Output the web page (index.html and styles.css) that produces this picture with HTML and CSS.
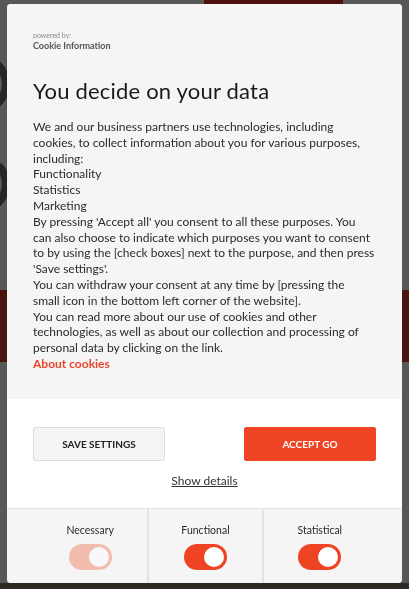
FILE: index.html
```html
<!DOCTYPE html>
<html lang="en">
<head>
    <meta charset="UTF-8">
    <meta name="viewport" content="width=device-width, initial-scale=1.0">
    <title>Cookie consent</title>
    <link rel="stylesheet" href="styles.css">
</head>
<body>
    <!-- Page behind the dialog -->
    <div class="page">
        <div class="page-top"><div class="page-hero"></div></div>
        <div class="page-shapes">
            <span class="arc arc-c"></span>
            <span class="arc arc-u"></span>
        </div>
        <div class="page-band"></div>
        <div class="page-foot"></div>
    </div>

    <!-- Consent dialog -->
    <div class="overlay">
        <div class="consent">
            <div class="consent-body">
                <div class="powered">
                    <span class="powered-by">powered by:</span>
                    <span class="powered-name">Cookie Information</span>
                </div>

                <h1>You decide on your data</h1>

                <p class="consent-text">
                    We and our business partners use technologies, including cookies, to collect information about you for various purposes, including:<br>
                    Functionality<br>
                    Statistics<br>
                    Marketing<br>
                    By pressing 'Accept all' you consent to all these purposes. You can also choose to indicate which purposes you want to consent to by using the [check boxes] next to the purpose, and then press 'Save settings'.<br>
                    You can withdraw your consent at any time by [pressing the<br>
                    small icon in the bottom left corner of the website].<br>
                    You can read more about our use of cookies and other technologies, as well as about our collection and processing of personal data by clicking on the link.<br>
                    <a href="#" class="about-link">About cookies</a>
                </p>
            </div>

            <div class="consent-actions">
                <div class="buttons">
                    <button class="btn btn-save">Save settings</button>
                    <button class="btn btn-accept">Accept go</button>
                </div>
                <a href="#" class="show-details">Show details</a>
            </div>

            <div class="consent-toggles">
                <div class="toggle-item">
                    <span>Necessary</span>
                    <span class="switch is-on is-locked"><span class="knob"></span></span>
                </div>
                <div class="toggle-item">
                    <span>Functional</span>
                    <span class="switch is-on"><span class="knob"></span></span>
                </div>
                <div class="toggle-item">
                    <span>Statistical</span>
                    <span class="switch is-on"><span class="knob"></span></span>
                </div>
            </div>
        </div>
    </div>
</body>
</html>
```

FILE: styles.css
```css
body {
    font-family: Lato, "Open Sans", sans-serif;
    margin: 0;
    padding: 0;
    height: 589px;
    overflow: hidden;
    background-color: #585858;
}

/* Page under the overlay */
.page {
    height: 589px;
    display: flex;
    flex-direction: column;
}

.page-top {
    height: 4px;
    padding-left: 204px;
}

.page-hero {
    width: 139px;
    height: 4px;
    background-color: #4d120c;
}

.page-shapes {
    height: 286px;
    display: flex;
    flex-direction: column;
    gap: 40px;
    padding-top: 50px;
    box-sizing: border-box;
}

.arc {
    display: block;
    width: 60px;
    height: 60px;
    margin-left: -50px;
    border: 8px solid #262626;
    border-radius: 50%;
    box-sizing: border-box;
}

.arc-u {
    border-top-color: transparent;
}

.page-band {
    height: 72px;
    background-color: #4a1510;
}

.page-foot {
    margin-top: auto;
    height: 6px;
    background-color: #2e2a25;
}

/* Dialog */
.overlay {
    position: fixed;
    top: 4px;
    left: 7px;
}

.consent {
    width: 395px;
    border-radius: 4px;
    overflow: hidden;
    background-color: #fff;
    color: #333;
}

.consent-body {
    background-color: #f5f5f5;
    padding: 27px 26px 27px;
}

.powered {
    display: flex;
    flex-direction: column;
}

.powered-by {
    font-size: 7px;
    line-height: 9px;
    color: #8a8a8a;
}

.powered-name {
    font-size: 9px;
    line-height: 12px;
    font-weight: 700;
    color: #555;
}

.consent-body h1 {
    font-size: 22px;
    font-weight: 400;
    color: #1a1a1a;
    margin: 25px 0 14px;
    line-height: 28px;
    letter-spacing: 0.2px;
}

.consent-text {
    font-size: 12px;
    line-height: 15.8px;
    margin: 0;
    color: #2b2b2b;
}

.about-link {
    color: #e8452a;
    font-weight: 700;
    text-decoration: none;
}

.consent-actions {
    padding: 28px 26px 20px;
    display: flex;
    flex-direction: column;
    align-items: center;
}

.buttons {
    width: 100%;
    display: flex;
    justify-content: space-between;
}

.btn {
    width: 132px;
    height: 34px;
    border-radius: 2px;
    font-family: inherit;
    font-size: 10px;
    font-weight: 700;
    text-transform: uppercase;
    cursor: pointer;
}

.btn-save {
    background-color: #f4f4f4;
    border: 1px solid #dedede;
    color: #222;
}

.btn-accept {
    background-color: #ee4424;
    border: 1px solid #ee4424;
    color: #fff;
}

.show-details {
    margin-top: 12px;
    font-size: 12px;
    color: #333;
    text-decoration: underline;
}

.consent-toggles {
    background-color: #f5f5f5;
    border-top: 1px solid #e2e2e2;
    padding: 0 26px;
    display: grid;
    grid-template-columns: 1fr 1fr 1fr;
}

.toggle-item {
    display: flex;
    flex-direction: column;
    align-items: center;
    gap: 8px;
    padding: 15px 0 13px;
    font-size: 10.5px;
    color: #2a2a2a;
}

.toggle-item + .toggle-item {
    border-left: 2px solid #e4e4e4;
}

.switch {
    width: 43px;
    height: 26px;
    border-radius: 13px;
    background-color: #ccc;
    display: flex;
    align-items: center;
    padding: 3px;
    box-sizing: border-box;
}

.switch.is-on {
    background-color: #ee4424;
    justify-content: flex-end;
}

.switch.is-locked {
    background-color: #f2bcae;
}

.knob {
    width: 20px;
    height: 20px;
    border-radius: 50%;
    background-color: #fff;
}

.switch.is-locked .knob {
    background-color: #f8f8f8;
}
```
